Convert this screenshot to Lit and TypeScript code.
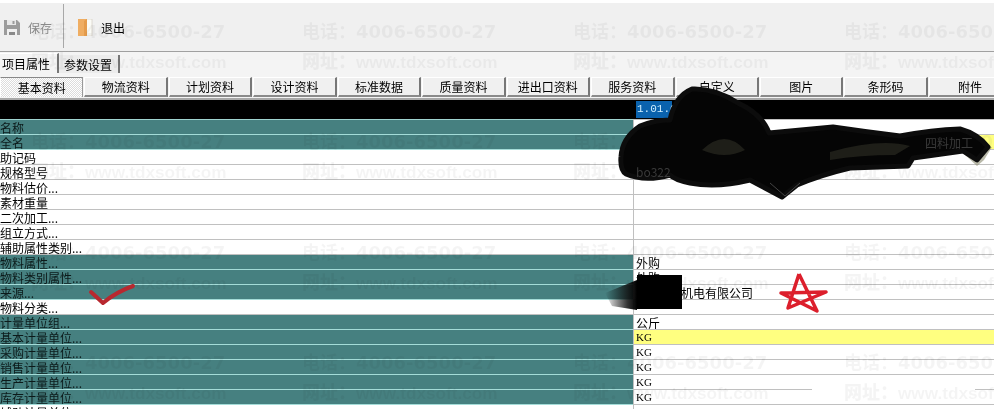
import { LitElement, html, css, svg } from "lit";
import { customElement } from "lit/decorators.js";

interface Row { label: string; teal?: boolean; value?: string; yellow?: boolean; latin?: boolean; hiddenStart?: boolean; }

const ROWS: Row[] = [
  { label: "名称", teal: true },
  { label: "全名", teal: true, yellow: true },
  { label: "助记码" },
  { label: "规格型号" },
  { label: "物料估价..." },
  { label: "素材重量" },
  { label: "二次加工..." },
  { label: "组立方式..." },
  { label: "辅助属性类别..." },
  { label: "物料属性...", teal: true, value: "外购" },
  { label: "物料类别属性...", teal: true, value: "外购" },
  { label: "来源...", teal: true, value: "机电有限公司", hiddenStart: true },
  { label: "物料分类..." },
  { label: "计量单位组...", teal: true, value: "公斤" },
  { label: "基本计量单位...", teal: true, value: "KG", yellow: true, latin: true },
  { label: "采购计量单位...", teal: true, value: "KG", latin: true },
  { label: "销售计量单位...", teal: true, value: "KG", latin: true },
  { label: "生产计量单位...", teal: true, value: "KG", latin: true },
  { label: "库存计量单位...", teal: true, value: "KG", latin: true },
  { label: "辅助计量单位..." },
];

const SUB_TABS = ["基本资料", "物流资料", "计划资料", "设计资料", "标准数据", "质量资料", "进出口资料", "服务资料", "自定义", "图片", "条形码", "附件"];

@customElement("app-root")
export class AppRoot extends LitElement {
  static styles = css`
    :host {
      display: block;
      position: relative;
      width: 994px;
      height: 409px;
      overflow: hidden;
      background: #fff;
      color: #000;
      font: 12px/15px "Noto Sans CJK SC", "Liberation Sans", sans-serif;
    }
    .toolbar {
      box-sizing: border-box;
      height: 52px;
      padding-top: 4px;
      background: linear-gradient(#fff 0 3px, #f0f0f0 3px);
      border-bottom: 1px solid #a0a0a0;
      display: flex;
      align-items: flex-start;
    }
    .tool { display: flex; align-items: center; gap: 8px; height: 44px; padding-top: 2px; box-sizing: border-box; }
    .tool.save { width: 64px; padding-left: 4px; color: #8a8a8a; border-right: 1px solid #a8a8a8; }
    .tool.exit { padding-left: 14px; }
    .proj-tabs { display: flex; height: 25px; box-sizing: border-box; padding-top: 1px; background: #f4f4f4; }
    .proj-tab { box-sizing: border-box; height: 20px; display: flex; align-items: center; }
    .proj-tab.one { width: 59px; padding-left: 2px; border-right: 2px solid #777; border-top: 1px solid #fff; }
    .proj-tab.two { width: 61px; padding-left: 5px; margin-top: 2px; height: 18px; border-right: 2px solid #777; background: #ececec; }
    .sub-tabs { display: grid; grid-template-columns: repeat(12, 84.45px); height: 20px; background: #f4f4f4; }
    .sub-tab {
      box-sizing: border-box;
      height: 20px;
      margin-right: 1px;
      display: flex;
      align-items: center;
      justify-content: center;
      background: #f0f0f0;
      border-top: 1px solid #fff;
      border-left: 1px solid #fff;
      border-right: 2px solid #777;
      border-bottom: 2px solid #8a8a8a;
    }
    .sub-tab.active {
      background: repeating-conic-gradient(#fff 0 25%, #dcdcdc 0 50%) 0 0 / 2px 2px;
      border-top: 1px solid #888;
      border-right: 1px solid #999;
      border-bottom: 0;
    }
    .rule { height: 4px; background: linear-gradient(#f4f4f4 0 1px, #a8a8a8 1px 3px, #000 3px); }
    .table { display: grid; grid-template-columns: 633px 1fr; }
    .head { height: 19px; background: #000; box-sizing: border-box; }
    .head.left { border-right: 1px solid #c0c0c0; width: 634px; border-bottom: 1px solid #9fd3d0; }
    .head.right { border-bottom: 1px solid #c0c0c0; padding-left: 3px; }
    .selected {
      display: block;
      width: 36px;
      height: 17px;
      background: #0a62ad;
      color: #cfefff;
      font-family: "Liberation Mono", monospace;
      font-size: 11px;
      line-height: 17px;
      padding-left: 1px;
      box-sizing: border-box;
    }
    .label, .value { box-sizing: border-box; height: 15px; line-height: 15px; white-space: nowrap; overflow: hidden; border-bottom: 1px solid #c0c0c0; }
    .label.teal { background: #468080; border-bottom-color: #a4dcd8; color: #0c1a1a; }
    .value { border-left: 1px solid #c0c0c0; padding-left: 2px; }
    .value.yellow { background: #ffff80; }
    .value.latin { font-family: "Liberation Serif", serif; font-size: 11px; }
    .value.hidden-start { padding-left: 47px; }
    .marks { position: absolute; inset: 0; pointer-events: none; }
    .marks text { font: 12px "Noto Sans CJK SC", sans-serif; fill: #3a3a3a; }
    .watermark {
      position: absolute;
      left: 31px;
      top: 17px;
      display: grid;
      grid-template-columns: repeat(4, 271px);
      grid-auto-rows: 110.3px;
      pointer-events: none;
      mix-blend-mode: multiply;
      color: rgba(0, 0, 0, 0.045);
      font: bold 18px/30px "DejaVu Sans", "Noto Sans CJK SC", sans-serif;
      white-space: nowrap;
      filter: blur(0.4px);
    }
    .site { font-family: "Liberation Sans", "Noto Sans CJK SC", sans-serif; font-size: 17.2px; }
    .site b { font-size: 18px; }
    .smudge { position: absolute; left: 812px; top: 388px; width: 163px; height: 3px; background: #fff; }
  `;

  private saveIcon() {
    return html`<svg width="16" height="16" viewBox="0 0 16 16"><path d="M0 1h13l3 3v12H0z" fill="#9c9c9c"/><path d="M3 1h9v5H3z" fill="#e8e8e8"/><path d="M8.5 2h2v3h-2z" fill="#9c9c9c"/><path d="M3 10h10v6H3z" fill="#f0f0f0"/><path d="M5 13h6v3H5z" fill="#8a8a8a"/></svg>`;
  }

  private exitIcon() {
    return html`<svg width="15" height="17" viewBox="0 0 15 17"><path d="M0 0h14v17H0z" fill="#fbfbf6" stroke="#cfc8bc" stroke-width=".6"/><path d="M0 0h9v17H0z" fill="#efad62"/><path d="M9 0l-3 2v15h3z" fill="#e59c4c"/></svg>`;
  }

  private marks() {
    return svg`
      <defs>
        <linearGradient id="smear" x1="0" x2="1" y1="0" y2="0"><stop offset="0" stop-color="#000" stop-opacity="0"/><stop offset=".7" stop-color="#111" stop-opacity=".85"/><stop offset="1" stop-color="#000"/></linearGradient>
      </defs>
      <path d="M963 153 Q980 148 992 147 L984 160 L977 166 Z" fill="#8a8a70" opacity=".6"/>
      <path d="M621 157 Q622 138 640 126 Q655 120 670 120 Q675 96 692 89 Q715 88 738 103 Q762 114 769 133 Q800 130 833 127 Q867 132 900 136 Q932 130 960 129 Q978 134 988 147 L977 160 L963 151 L913 158 L908 166 L850 168 Q820 175 797 185 L782 197 L750 180 Q717 188 690 183 Q675 180 670 175 Q645 182 626 174 Q620 170 621 157 Z" fill="#050505" stroke="#0c0c0c" stroke-width="5" stroke-linejoin="round"/>
      <path d="M702 150 Q725 128 745 150 Q725 160 702 150Z M830 152 Q880 138 910 146 L895 155 Q860 155 830 160Z" fill="#1e1e18"/>
      <path d="M770 183 L785 196 L800 183" fill="none" stroke="#444" stroke-width="1"/>
      <text x="925" y="148">四料加工</text>
      <text x="636" y="177" font-size="11">bo322</text>
      <path d="M605 293 L637 280 V310 L612 306 Z" fill="url(#smear)"/>
      <rect x="637" y="275" width="45" height="34" fill="#000"/>
      <path d="M91 292 L103 303 Q116 292 133 286" fill="none" stroke="#b8282f" stroke-width="4" stroke-linecap="round" stroke-linejoin="round"/>
      <path d="M799 274 L788 308 L826 292 L781 293 L817 311 L799 274" fill="none" stroke="#dc1f2c" stroke-width="3.5" stroke-linejoin="round"/>
    `;
  }

  render() {
    const marks: unknown[] = [];
    for (let i = 0; i < 16; i++) {
      marks.push(html`<div>电话：4006-6500-27<br /><span class="site"><b>网址：</b>www.tdxsoft.com</span></div>`);
    }
    return html`
      <div class="toolbar">
        <div class="tool save">${this.saveIcon()}<span>保存</span></div>
        <div class="tool exit">${this.exitIcon()}<span>退出</span></div>
      </div>
      <div class="proj-tabs">
        <div class="proj-tab one">项目属性</div>
        <div class="proj-tab two">参数设置</div>
      </div>
      <div class="sub-tabs">
        ${SUB_TABS.map((t, i) => html`<div class="sub-tab ${i === 0 ? "active" : ""}">${t}</div>`)}
      </div>
      <div class="rule"></div>
      <div class="table">
        <div class="head left"></div>
        <div class="head right"><span class="selected">1.01.0</span></div>
        ${ROWS.map(
          (r) => html`
            <div class="label ${r.teal ? "teal" : ""}">${r.label}</div>
            <div class="value ${r.yellow ? "yellow" : ""} ${r.latin ? "latin" : ""} ${r.hiddenStart ? "hidden-start" : ""}">${r.value ?? ""}</div>
          `
        )}
      </div>
      <div class="smudge"></div>
      <div class="watermark">${marks}</div>
      <svg class="marks" width="994" height="409" viewBox="0 0 994 409">${this.marks()}</svg>
    `;
  }
}
